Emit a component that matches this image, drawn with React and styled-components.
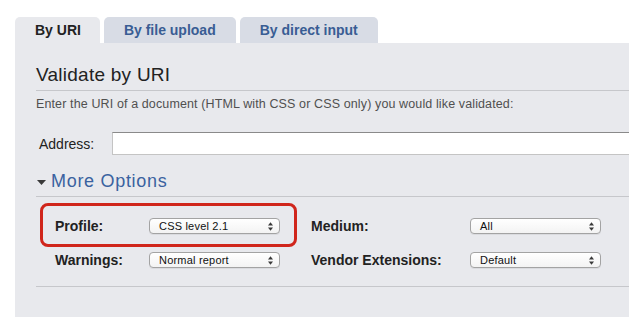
import styled, { createGlobalStyle } from 'styled-components';

const Global = createGlobalStyle`
    html, body {
        margin: 0;
        padding: 0;
        background: #ffffff;
        overflow: hidden;
    }
    body {
        font-family: "Liberation Sans", Arial, sans-serif;
        color: #222;
    }
`;

function Arrows() {
    return (
        <svg width="5" height="9" viewBox="0 0 5 9" fill="#3a3a3a">
            <path d="M0 3.5 L2.5 0.3 L5 3.5Z" />
            <path d="M0 5.5 L2.5 8.7 L5 5.5Z" />
        </svg>
    );
}

function Select({ value }) {
    return (
        <SelectBox>
            <span>{value}</span>
            <Arrows />
        </SelectBox>
    );
}

function App() {
    return (
        <Page>
            <Global />
            <Tabs>
                <Tab $active>By URI</Tab>
                <Tab>By file upload</Tab>
                <Tab>By direct input</Tab>
            </Tabs>
            <Panel>
                <Heading>Validate by URI</Heading>
                <Intro>
                    Enter the URI of a document (HTML with CSS or CSS only) you would like validated:
                </Intro>
                <AddressRow>
                    <label>Address:</label>
                    <AddressInput type="text" />
                </AddressRow>
                <MoreOptions>
                    <svg width="9" height="5" viewBox="0 0 9 5" fill="#3a3a3a">
                        <path d="M0 0 L9 0 L4.5 5Z" />
                    </svg>
                    More Options
                </MoreOptions>
                <Options>
                    <Highlight />
                    <OptLabel>Profile:</OptLabel>
                    <Select value="CSS level 2.1" />
                    <OptLabel>Medium:</OptLabel>
                    <Select value="All" />
                    <OptLabel>Warnings:</OptLabel>
                    <Select value="Normal report" />
                    <OptLabel>Vendor Extensions:</OptLabel>
                    <Select value="Default" />
                </Options>
            </Panel>
        </Page>
    );
}

export default App;

const Page = styled.div`
    padding: 17px 0 0 15px;
`;

const Tabs = styled.div`
    display: flex;
    gap: 4px;
`;

const Tab = styled.div`
    height: 26px;
    line-height: 27px;
    padding: 0 ${(p) => (p.$active ? '19px' : '20px')} 0 20px;
    border-radius: 5px 5px 0 0;
    font-size: 14px;
    font-weight: bold;
    background: ${(p) => (p.$active ? '#e8e9ed' : '#d8dce5')};
    color: ${(p) => (p.$active ? '#222222' : '#395d94')};
`;

const Panel = styled.div`
    background: #e8e9ed;
    height: 274px;
    padding-left: 21px;
    box-sizing: border-box;
`;

const Heading = styled.h2`
    margin: 0;
    padding: 21px 0 4px;
    font-size: 19px;
    line-height: 22px;
    font-weight: normal;
    letter-spacing: 0.25px;
    color: #222;
    border-bottom: 1px solid #c6c7cb;
`;

const Intro = styled.p`
    margin: 6px 0 0;
    font-size: 12.5px;
    line-height: 15px;
    letter-spacing: 0.12px;
    color: #505050;
`;

const AddressRow = styled.div`
    display: flex;
    align-items: center;
    margin-top: 20px;
    padding-left: 3px;

    label {
        width: 73px;
        font-size: 14px;
        line-height: 16px;
        color: #222;
    }
`;

const AddressInput = styled.input`
    flex: 1;
    min-width: 0;
    height: 23px;
    box-sizing: border-box;
    background: #fff;
    border: 1px solid #c4c4c4;
    border-top-color: #8a8a8a;
    border-right: none;
    margin: 0;
    padding: 0 4px;
    outline: none;
`;

const MoreOptions = styled.div`
    display: flex;
    align-items: center;
    gap: 5px;
    margin-top: 16px;
    padding: 0 0 5px 1px;
    font-size: 18px;
    line-height: 20px;
    letter-spacing: 0.7px;
    color: #3a62a0;
    border-bottom: 1px solid #c6c7cb;

    svg {
        margin-top: 3px;
    }
`;

const Options = styled.div`
    position: relative;
    display: grid;
    grid-template-columns: 94px 162px 159px 132px;
    grid-auto-rows: 20px;
    row-gap: 14px;
    align-items: center;
    padding: 19px 0 16px 19px;
    border-bottom: 1px solid #c6c7cb;
`;

const Highlight = styled.div`
    position: absolute;
    left: 4px;
    top: 6px;
    width: 257px;
    height: 44px;
    box-sizing: border-box;
    border: 3px solid #d0261c;
    border-radius: 8px;
    pointer-events: none;
`;

const OptLabel = styled.div`
    font-size: 14px;
    line-height: 16px;
    font-weight: bold;
    color: #222;
`;

const SelectBox = styled.div`
    width: 131px;
    height: 16px;
    box-sizing: border-box;
    display: flex;
    align-items: center;
    justify-content: space-between;
    padding: 0 6px 0 9px;
    border: 1px solid #a3a3a3;
    border-radius: 4px;
    background: linear-gradient(#ffffff, #f3f3f3);
    box-shadow: 0 1px 0 rgba(0, 0, 0, 0.06);
    font-size: 11px;
    letter-spacing: 0.2px;
    color: #111;
`;
